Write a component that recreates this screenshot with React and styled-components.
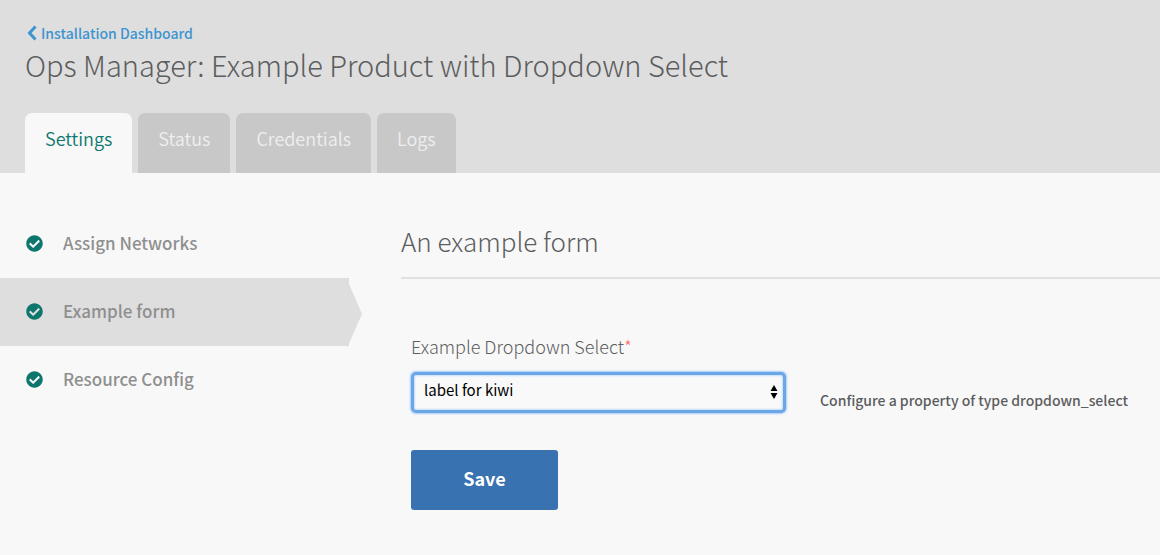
import React from "react";
import styled, { createGlobalStyle } from "styled-components";
import { FaCheckCircle } from "react-icons/fa";

const Global = createGlobalStyle`
  * { box-sizing: border-box; }
  body {
    margin: 0;
    background: #f8f8f8;
    color: #5c5d5e;
    font-family: "Noto Sans CJK SC", "Open Sans", sans-serif;
  }
`;

const Header = styled.header`
  background: #dedede;
  padding: 22px 25px 0;
`;

const BackLink = styled.a`
  display: flex;
  align-items: center;
  gap: 4px;
  width: max-content;
  padding-left: 2px;
  font-size: 14px;
  font-weight: 500;
  line-height: 22px;
  color: #3c94d0;
  text-decoration: none;
`;

const Chevron = styled.svg`
  width: 10px;
  height: 16px;
`;

const Title = styled.h1`
  margin: 0;
  font-size: 29px;
  font-weight: 300;
  line-height: 40px;
`;

const Tabs = styled.nav`
  display: flex;
  gap: 6px;
  margin-top: 29px;
`;

const Tab = styled.a`
  height: 60px;
  padding: 0 20px;
  border-radius: 7px 7px 0 0;
  font-size: 18px;
  font-weight: 350;
  line-height: 50px;
  text-decoration: none;
  background: ${(p) => (p.$active ? "#f8f8f8" : "#c8c8c8")};
  color: ${(p) => (p.$active ? "#0d776e" : "#efefef")};
`;

const Body = styled.div`
  display: grid;
  grid-template-columns: 349px 1fr;
  column-gap: 52px;
  padding-top: 37px;
`;

const SideNav = styled.nav`
  display: flex;
  flex-direction: column;
`;

const SideItem = styled.a`
  position: relative;
  display: flex;
  align-items: center;
  gap: 20px;
  height: 68px;
  padding: 0 26px 4px;
  font-size: 17px;
  font-weight: 500;
  color: #8f8f8f;
  text-decoration: none;
  background: ${(p) => (p.$active ? "#dedede" : "transparent")};
`;

const CheckIcon = styled(FaCheckCircle)`
  width: 17px;
  height: 17px;
  margin-top: 2px;
  color: #0d776e;
`;

const Arrow = styled.svg`
  position: absolute;
  right: -13px;
  top: 0;
  width: 15px;
  height: 70px;
  fill: #dedede;
`;

const Main = styled.main`
  padding-top: 6px;
`;

const FormTitle = styled.h2`
  margin: 0;
  padding-bottom: 11px;
  border-bottom: 2px solid #e1e1e1;
  font-size: 26px;
  font-weight: 300;
  line-height: 50px;
`;

const Form = styled.form`
  padding: 52px 10px 0;
`;

const Label = styled.label`
  display: block;
  font-size: 18px;
  font-weight: 300;
  line-height: 30px;
`;

const Required = styled.span`
  color: #ff6464;
`;

const FieldRow = styled.div`
  display: flex;
  align-items: center;
  gap: 34px;
  margin-top: 11px;
`;

const SelectBox = styled.div`
  position: relative;
  flex: none;
  width: 375px;
`;

const Select = styled.select`
  appearance: none;
  display: block;
  width: 100%;
  height: 41px;
  padding: 0 10px 6px;
  border: 3px solid #6ba7e6;
  border-radius: 5px;
  outline: none;
  box-shadow: 0 0 2px 1px #a6cdf8, inset 0 0 2px 1px #c4dcf8;
  background: #f9f9f9;
  color: #000;
  font: 400 15px "Noto Sans CJK SC", sans-serif;
`;

const Arrows = styled.svg`
  position: absolute;
  right: 8px;
  top: 12px;
  width: 8px;
  height: 16px;
  pointer-events: none;
`;

const Help = styled.p`
  margin: 0;
  padding-top: 14px;
  font-size: 14px;
  font-weight: 500;
  line-height: 26px;
`;

const Save = styled.button`
  width: 147px;
  height: 60px;
  margin-top: 37px;
  padding: 0 0 5px;
  border: 0;
  border-radius: 3px;
  background: #3872b1;
  color: #fff;
  font: 700 18px "Noto Sans CJK SC", sans-serif;
`;

const tabs = ["Settings", "Status", "Credentials", "Logs"];
const steps = ["Assign Networks", "Example form", "Resource Config"];

export default function App() {
  return (
    <>
      <Global />
      <Header>
        <BackLink href="#">
          <Chevron viewBox="0 0 10 16">
            <path d="M8.500 1.500 2.500 8l6 6.500" fill="none" stroke="currentColor" strokeWidth="3" />
          </Chevron>
          Installation Dashboard
        </BackLink>
        <Title>Ops Manager: Example Product with Dropdown Select</Title>
        <Tabs>
          {tabs.map((t) => <Tab key={t} href="#" $active={t === "Settings"}>{t}</Tab>)}
        </Tabs>
      </Header>
      <Body>
        <SideNav>
          {steps.map((s) => (
            <SideItem key={s} href="#" $active={s === "Example form"}>
              <CheckIcon />{s}
              {s === "Example form" && (
                <Arrow viewBox="0 0 15 70"><path d="M2 6 15 36 0 70V6z" /></Arrow>
              )}
            </SideItem>
          ))}
        </SideNav>
        <Main>
          <FormTitle>An example form</FormTitle>
          <Form onSubmit={(e) => e.preventDefault()}>
            <Label htmlFor="fruit">Example Dropdown Select<Required>*</Required></Label>
            <FieldRow>
              <SelectBox>
                <Select id="fruit"><option>label for kiwi</option></Select>
                <Arrows viewBox="0 0 8 16"><path d="M4 1 7.500 7h-7zM4 15 .5 9h7z" /></Arrows>
              </SelectBox>
              <Help>Configure a property of type dropdown_select</Help>
            </FieldRow>
            <Save type="submit">Save</Save>
          </Form>
        </Main>
      </Body>
    </>
  );
}
